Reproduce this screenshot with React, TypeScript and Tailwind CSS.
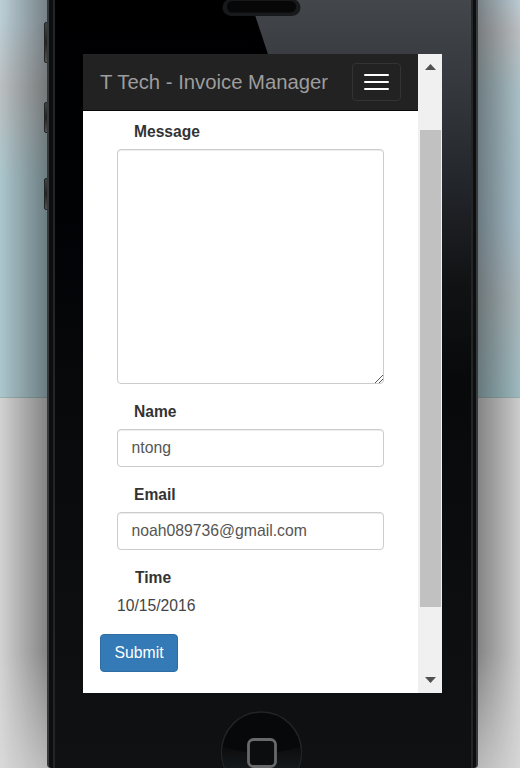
import React from 'react';

const sideButtons = [
  { top: 'top-[22px]', height: 'h-[41px]' },
  { top: 'top-[102px]', height: 'h-[31px]' },
  { top: 'top-[178px]', height: 'h-[32px]' },
];

function Backdrop() {
  return (
    <div className="absolute inset-0 flex flex-col">
      <div className="flex h-[397px] justify-between">
        <div className="w-1/2 bg-linear-to-b from-[#c6dae3] from-5% via-[#c6cacc] via-22% to-[#b5d2d9] to-45%" />
        <div className="w-1/2 bg-[linear-gradient(to_bottom,#cbdde6_0%,#cbced1_8%,#b8d0d7_22%,#b4cdd9_55%,#b7c5ca_75%,#abcbd1_100%)]" />
      </div>
      <div className="h-px bg-[#a3bbbd]" />
      <div className="flex-1 bg-[#dedede]" />
    </div>
  );
}

function Phone({ children }: { children: React.ReactNode }) {
  return (
    <div className="relative ml-[47px] h-[768px] w-[431px]">
      {sideButtons.map((b) => (
        <div
          key={b.top}
          className={`absolute -left-[3px] w-[5px] rounded-l-[2px] border border-[#222526] bg-linear-to-b from-[#414546] via-[#222] to-[#555] ${b.top} ${b.height}`}
        />
      ))}
      <div className="relative flex h-full flex-col rounded-b-[4px] border-x-2 border-[#38393b] bg-[#0d0e10] pl-[4px] pr-[3px]">
        <div className="relative flex h-full flex-col border-x-2 border-[#242527] bg-linear-to-b from-[#000001] via-[#08090b] to-[#101113] pl-[28px] pt-[54px]">
          <svg className="absolute left-0 top-0" width="416" height="380" viewBox="55 0 416 380">
            <defs>
              <linearGradient id="gloss" x1="0" y1="0" x2="0" y2="1">
                <stop offset="0" stopColor="#43464a" />
                <stop offset=".25" stopColor="#33363b" />
                <stop offset=".45" stopColor="#25282d" />
                <stop offset=".75" stopColor="#111214" />
                <stop offset="1" stopColor="#08090b" />
              </linearGradient>
            </defs>
            <path d="M250 0H472V380H376Z" fill="url(#gloss)" />
            <rect x="222.500" y="-1" width="78" height="17" rx="8.500" fill="#17191b" />
            <rect x="227" y="1" width="69" height="11.500" rx="5.500" fill="#070708" />
          </svg>
          {children}
          <HomeButton />
        </div>
      </div>
    </div>
  );
}

function HomeButton() {
  return (
    <svg className="absolute left-[165px] top-[710px]" width="84" height="58" viewBox="0 0 84 58">
      <defs>
        <linearGradient id="homeShade" x1="0" y1="0" x2="0" y2="1">
          <stop offset="0" stopColor="#0b0c0e" />
          <stop offset="1" stopColor="#15191b" />
        </linearGradient>
      </defs>
      <circle cx="41.500" cy="42" r="40" fill="#07080a" stroke="#222426" strokeWidth="1.5" />
      <path d="M3 37Q41 49 80 37Q82 45 78 58H5Q1 45 3 37Z" fill="url(#homeShade)" />
      <rect x="28.500" y="29.500" width="27" height="27" rx="5" fill="#0c0d0f" stroke="#68696a" strokeWidth="2.8" />
    </svg>
  );
}

function NavBar() {
  return (
    <nav className="flex h-[57px] shrink-0 items-center justify-between border-b border-[#080808] bg-[#222] px-[17px]">
      <span className="whitespace-nowrap text-[20.3px] leading-[22px] text-[#9d9d9d]">T Tech - Invoice Manager</span>
      <button aria-label="Menu" className="flex h-[38px] w-[49px] flex-col items-center justify-center gap-[5px] rounded-[4px] border border-[#333]">
        <span className="h-[2px] w-[25px] rounded-[1px] bg-white" />
        <span className="h-[2px] w-[25px] rounded-[1px] bg-white" />
        <span className="h-[2px] w-[25px] rounded-[1px] bg-white" />
      </button>
    </nav>
  );
}

function Label({ children }: { children: React.ReactNode }) {
  return <label className="block h-[28px] pl-[17px] text-[15.6px] font-bold leading-[22px] text-[#333]">{children}</label>;
}

const field =
  'block w-full rounded-[4px] border border-[#ccc] bg-white px-[13.5px] text-[15.75px] text-[#555] shadow-[inset_0_1px_1px_rgba(0,0,0,0.075)] outline-none';

function InvoiceForm() {
  return (
    <form className="flex-1 pl-[17px] pt-[10px]">
      <div className="ml-[17px] w-[267px]">
        <Label>Message</Label>
        <div className="relative mb-[17px]">
          <textarea className={`${field} h-[235px] resize-none`} />
          <svg className="absolute bottom-px right-px" width="8" height="8" viewBox="0 0 8 8">
            <path d="M0 8L8 0M4 8L8 4" stroke="#555" fill="none" />
          </svg>
        </div>
        <Label>Name</Label>
        <input className={`${field} mb-[17px] h-[38px]`} defaultValue="ntong" />
        <Label>Email</Label>
        <input className={`${field} mb-[17px] h-[38px]`} defaultValue="noah089736@gmail.com" />
        <Label>
          <span className="ml-px">Time</span>
        </Label>
        <p className="text-[15.7px] leading-[22px] text-[#444]">10/15/2016</p>
      </div>
      <button type="button" className="mt-[17px] h-[38px] w-[78px] rounded-[4px] border border-[#2e6da4] bg-[#337ab7] text-[15.75px] text-white">
        Submit
      </button>
    </form>
  );
}

function Scrollbar() {
  return (
    <div className="flex w-[24px] shrink-0 flex-col items-center bg-[#f0f0f0]">
      <svg className="h-[76px] w-[24px]" viewBox="0 0 24 76">
        <path d="M7 16L12.500 10L18 16Z" fill="#505050" />
      </svg>
      <div className="ml-px h-[477px] w-[21px] bg-[#c1c1c1]" />
      <svg className="h-[86px] w-[24px]" viewBox="0 0 24 86">
        <path d="M7 70H18L12.500 76Z" fill="#505050" />
      </svg>
    </div>
  );
}

export default function App() {
  return (
    <div className="relative h-[768px] w-[520px] overflow-hidden font-['Liberation_Sans',Arial,sans-serif]">
      <Backdrop />
      <div className="absolute inset-y-0 left-0 w-[49px] bg-linear-to-r from-black/5 to-black/42 mask-b-from-85% mask-b-to-110%" />
      <div className="absolute inset-y-0 right-0 w-[44px] bg-linear-to-l from-black/8 to-black/42 mask-b-from-85% mask-b-to-110%" />
      <Phone>
        <main className="relative flex h-[639px] w-[359px] bg-white">
          <div className="flex min-w-0 flex-1 flex-col">
            <NavBar />
            <InvoiceForm />
          </div>
          <Scrollbar />
        </main>
      </Phone>
    </div>
  );
}
